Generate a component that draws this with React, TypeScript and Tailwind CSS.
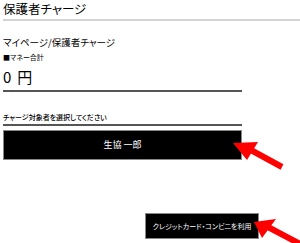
import React from "react";

export default function App() {
  return (
    <div className="relative h-[243px] w-[300px] overflow-hidden bg-white font-['Noto_Sans_CJK_JP',sans-serif] text-black [font-feature-settings:'palt']">
      <div className="pl-[3px]">
        <h1 className="pt-[1px] text-[12.5px] leading-[16px]">保護者チャージ</h1>
        <div className="mt-[2px] h-[2px] bg-[#d3d3d3]" />
      </div>

      <div className="w-[242px] pl-[3px]">
        <p className="mt-[15px] text-[9.5px] leading-[12px]">マイページ/保護者チャージ</p>
        <p className="mt-[4px] text-[7px] leading-[10px]">■マネー合計</p>
        <p className="mt-[6px] text-[15px] leading-[17px]">
          0<span className="ml-[6px]">円</span>
        </p>
        <div className="mt-[5px] h-[2px] bg-[#555]" />

        <p className="mt-[20px] text-[7px] font-medium leading-[10px]">チャージ対象者を選択してください</p>
        <div className="mt-[2px] h-[2px] bg-[#555]" />

        <button className="mt-[4px] flex h-[30px] w-full items-center justify-center border border-[#888] bg-black text-[9px] text-white">
          生協 一郎
        </button>

        <button className="ml-[142px] mt-[53px] flex h-[26px] w-[114px] items-center justify-center whitespace-nowrap border border-[#888] bg-black text-[7px] text-white">
          クレジットカード・コンビニを利用
        </button>
      </div>

      <svg className="absolute left-0 top-0" width="300" height="243" viewBox="0 0 300 243">
        <polygon points="233,143 258,142 247,160" fill="#f00" />
        <line x1="249" y1="149" x2="282" y2="167" stroke="#f00" strokeWidth="6" />
        <polygon points="254,222 276,219 262,238" fill="#f00" />
        <line x1="266" y1="226" x2="302" y2="245" stroke="#f00" strokeWidth="6" />
      </svg>
    </div>
  );
}
